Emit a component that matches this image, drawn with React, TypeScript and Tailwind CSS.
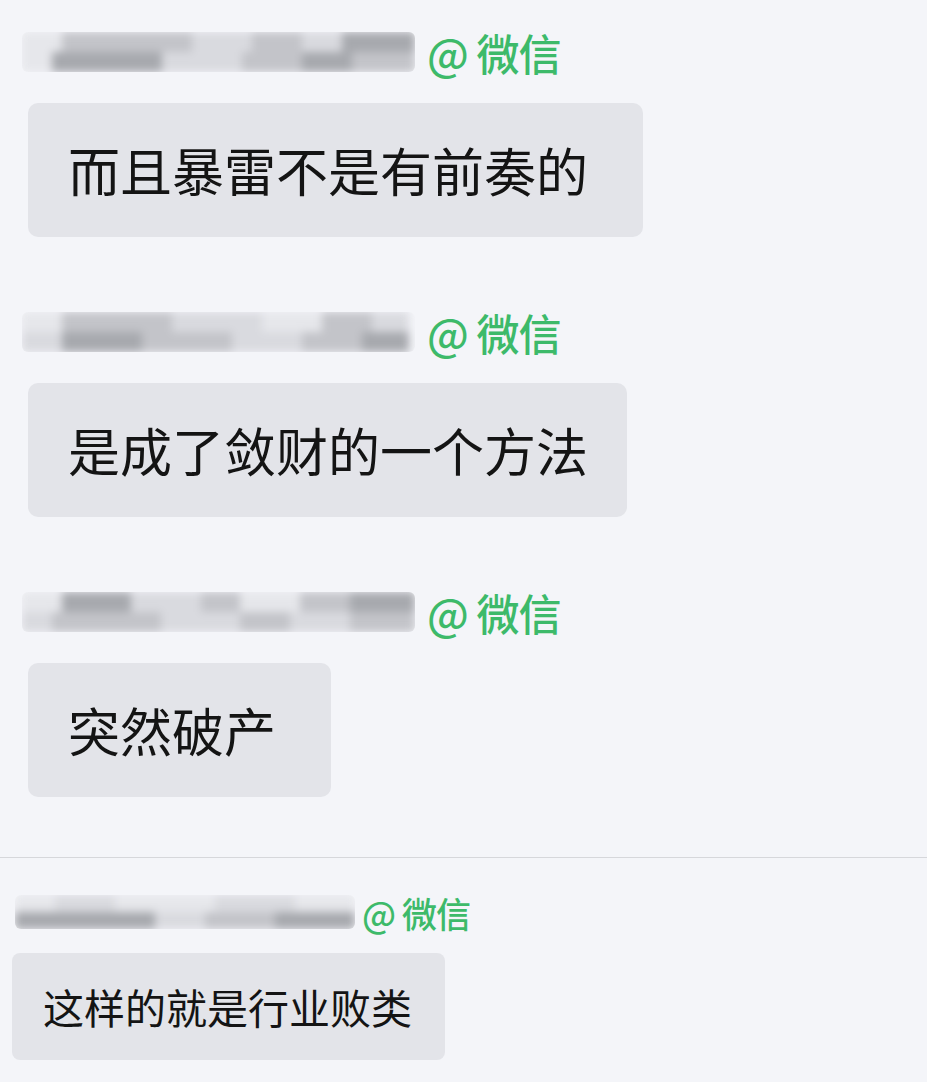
const DARK = "#a7a9ae";
const MID = "#c3c4c9";
const LIGHT = "#d9dadf";
const PALE = "#e6e7eb";

type Seg = [number, string];

type Comment = {
  top: Seg[];
  bottom: Seg[];
  text: string;
  bubbleWidth: number;
};

const comments: Comment[] = [
  {
    top: [[40, PALE], [130, MID], [60, LIGHT], [50, MID], [40, LIGHT], [73, DARK]],
    bottom: [[30, PALE], [110, DARK], [80, LIGHT], [60, MID], [50, DARK], [63, MID]],
    text: "而且暴雷不是有前奏的",
    bubbleWidth: 615,
  },
  {
    top: [[40, PALE], [110, MID], [90, LIGHT], [60, PALE], [50, MID], [37, LIGHT]],
    bottom: [[40, LIGHT], [80, DARK], [90, MID], [70, LIGHT], [60, MID], [47, DARK]],
    text: "是成了敛财的一个方法",
    bubbleWidth: 599,
  },
  {
    top: [[40, PALE], [70, DARK], [70, LIGHT], [40, MID], [60, PALE], [50, MID], [66, DARK]],
    bottom: [[30, LIGHT], [110, MID], [80, LIGHT], [50, MID], [60, LIGHT], [66, MID]],
    text: "突然破产",
    bubbleWidth: 303,
  },
];

function BlurName({ top, bottom, width, height }: { top: Seg[]; bottom: Seg[]; width: number; height: number }) {
  return (
    <div className="shrink-0 overflow-hidden rounded-md" style={{ width, height }}>
      <div className="flex h-full flex-col blur-[4px]">
        <div className="flex flex-1">
          {top.map(([w, c], i) => (
            <div key={i} style={{ width: w, background: c }} />
          ))}
        </div>
        <div className="flex flex-1">
          {bottom.map(([w, c], i) => (
            <div key={i} style={{ width: w, background: c }} />
          ))}
        </div>
      </div>
    </div>
  );
}

export default function App() {
  return (
    <div
      className="h-[1082px] w-[927px] overflow-hidden bg-[#f4f5f9] text-[#141414]"
      style={{ fontFamily: '"Noto Sans CJK SC", "Noto Sans", sans-serif' }}
    >
      <div className="flex flex-col gap-[71px] pl-[22px] pt-[28px]">
        {comments.map((c, i) => (
          <div key={i} className="flex flex-col">
            <div className="flex h-[48px] items-center">
              <BlurName top={c.top} bottom={c.bottom} width={393} height={40} />
              <span className="ml-[12px] text-[43px] font-medium leading-none tracking-[-1px] text-[#3dba6a]">@ 微信</span>
            </div>
            <div
              className="ml-[6px] mt-[27px] flex h-[134px] items-center rounded-[10px] bg-[#e3e4e9] pl-[40px] text-[52px] leading-none"
              style={{ width: c.bubbleWidth }}
            >
              {c.text}
            </div>
          </div>
        ))}
      </div>

      <div className="mt-[60px] h-px w-full bg-[#d6d7db]" />

      <div className="flex flex-col pl-[15px] pt-[32px]">
        <div className="flex h-[44px] items-center">
          <BlurName
            top={[[40, PALE], [60, LIGHT], [100, PALE], [80, LIGHT], [60, PALE]]}
            bottom={[[140, DARK], [50, LIGHT], [70, MID], [80, DARK]]}
            width={340}
            height={34}
          />
          <span className="ml-[7px] text-[35px] font-medium leading-none tracking-[-1px] text-[#3dba6a]">@ 微信</span>
        </div>
        <div className="-ml-[3px] mt-[19px] flex h-[107px] w-[433px] items-center rounded-[8px] bg-[#e3e4e9] pl-[31px] text-[41px] leading-none">
          这样的就是行业败类
        </div>
      </div>
    </div>
  );
}
